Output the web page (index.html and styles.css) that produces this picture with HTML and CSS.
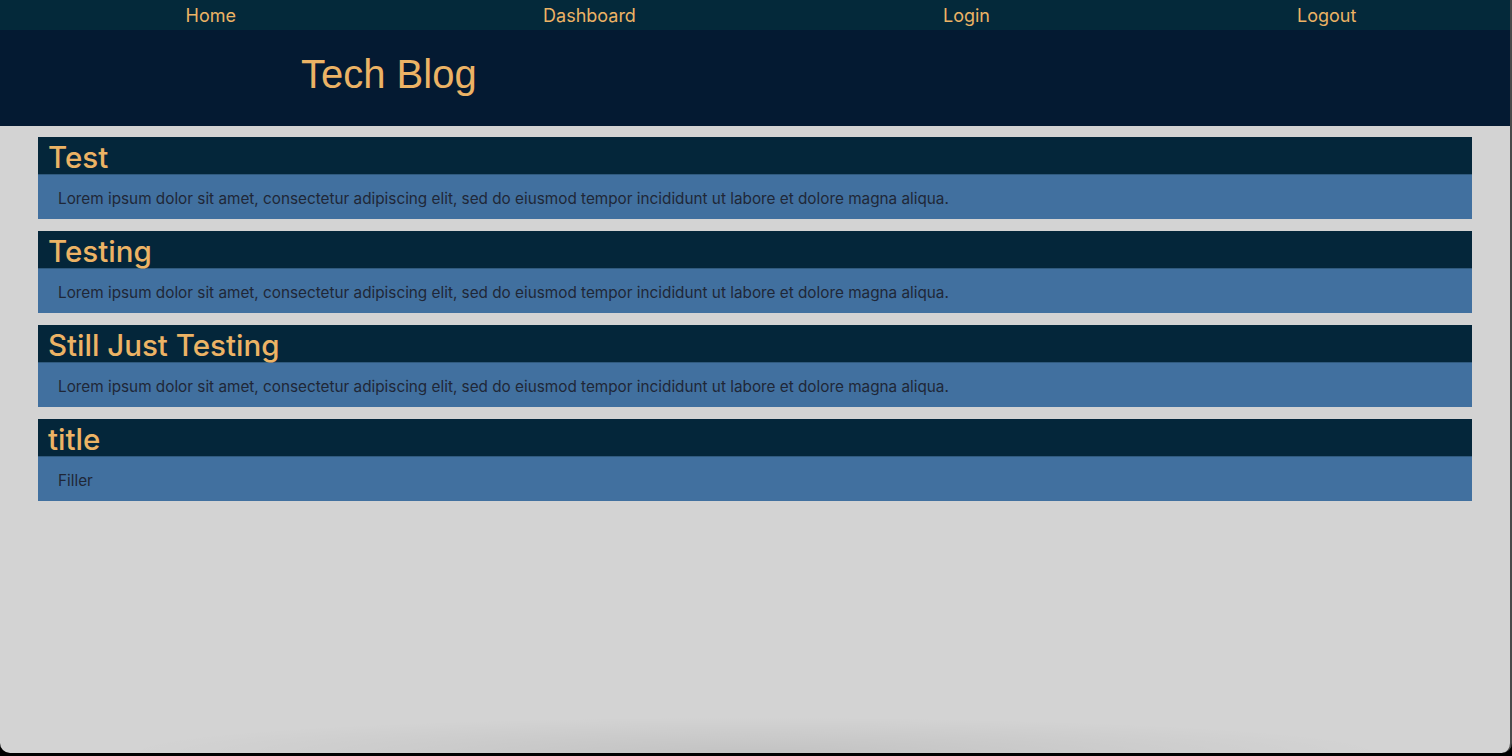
FILE: index.html
```html
<!DOCTYPE html>
<html lang="en">
<head>
<meta charset="utf-8">
<title>Tech Blog</title>
<link rel="stylesheet" href="styles.css">
</head>
<body>
<div class="window">
  <nav class="nav">
    <a href="#">Home</a>
    <a href="#">Dashboard</a>
    <a href="#">Login</a>
    <a href="#">Logout</a>
  </nav>
  <header class="masthead">
    <h1>Tech Blog</h1>
  </header>
  <main class="posts">
    <article class="post">
      <h2 class="post-title">Test</h2>
      <p class="post-body">Lorem ipsum dolor sit amet, consectetur adipiscing elit, sed do eiusmod tempor incididunt ut labore et dolore magna aliqua.</p>
    </article>
    <article class="post">
      <h2 class="post-title">Testing</h2>
      <p class="post-body">Lorem ipsum dolor sit amet, consectetur adipiscing elit, sed do eiusmod tempor incididunt ut labore et dolore magna aliqua.</p>
    </article>
    <article class="post">
      <h2 class="post-title">Still Just Testing</h2>
      <p class="post-body">Lorem ipsum dolor sit amet, consectetur adipiscing elit, sed do eiusmod tempor incididunt ut labore et dolore magna aliqua.</p>
    </article>
    <article class="post">
      <h2 class="post-title">title</h2>
      <p class="post-body">Filler</p>
    </article>
  </main>
</div>
</body>
</html>
```

FILE: styles.css
```css
html, body {
  margin: 0;
  padding: 0;
  background: #000;
  height: 756px;
  overflow: hidden;
}

.window {
  position: relative;
  width: 1510px;
  height: 753px;
  background: #d3d3d3;
  border-radius: 0 0 10px 10px;
  overflow: hidden;
  font-family: Inter, "Noto Sans", sans-serif;
  border-right: 2px solid #4a4a4a;
  box-sizing: content-box;
}

.window::after {
  content: "";
  position: absolute;
  left: 120px;
  right: 120px;
  bottom: 0;
  height: 36px;
  background: radial-gradient(ellipse 50% 100% at 50% 100%, rgba(0,0,0,0.08), rgba(0,0,0,0));
  pointer-events: none;
}

.nav {
  display: flex;
  justify-content: space-around;
  align-items: center;
  height: 30px;
  padding-left: 32px;
  background: #04293a;
}

.nav a {
  color: #ecb365;
  text-decoration: none;
  font-size: 18px;
  line-height: 30px;
  position: relative;
  top: 1px;
}

.masthead {
  height: 96px;
  background: #041a32;
  display: flex;
  align-items: center;
  padding-left: 301px;
}

.masthead h1 {
  margin: 0;
  font-family: "Liberation Sans", Arial, sans-serif;
  font-weight: 400;
  font-size: 40px;
  color: #ecb365;
  position: relative;
  top: -4px;
}

.posts {
  display: flex;
  flex-direction: column;
  gap: 12px;
  padding: 11px 38px 0 38px;
}

.post {
  display: flex;
  flex-direction: column;
}

.post-title {
  margin: 0;
  height: 38px;
  line-height: 41px;
  padding-left: 10px;
  background: #04263a;
  color: #ecb365;
  font-size: 29.5px;
  font-weight: 500;
  border-bottom: 1px solid #305a7e;
  box-sizing: border-box;
}

.post-body {
  margin: 0;
  height: 44px;
  line-height: 47px;
  padding-left: 20px;
  background: #41709f;
  color: #1f2737;
  font-size: 15.3px;
}
```
